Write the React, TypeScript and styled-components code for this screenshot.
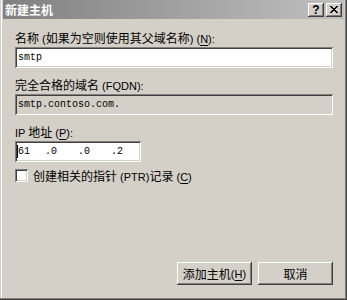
import styled, { createGlobalStyle } from 'styled-components'

const GlobalStyle = createGlobalStyle`
  html, body {
    margin: 0;
    padding: 0;
    background: #d4d0c8;
  }
  body {
    font-family: "Noto Sans CJK SC", sans-serif;
    font-size: 12px;
    color: #000;
  }
`

const raised = `
  box-shadow: inset -1px -1px #404040, inset 1px 1px #fff, inset -2px -2px #808080, inset 2px 2px #d4d0c8;
`
const sunken = `
  box-shadow: inset 1px 1px #808080, inset -1px -1px #fff, inset 2px 2px #404040, inset -2px -2px #d4d0c8;
`

export default function App() {
  return (
    <>
      <GlobalStyle />
      <Window>
        <TitleBar>
          <Title>新建主机</Title>
          <TitleButtons>
            <CaptionButton>
              <HelpMark>?</HelpMark>
            </CaptionButton>
            <CaptionButton>
              <svg width="8" height="7" viewBox="0 0 8 7" shapeRendering="crispEdges">
                <path
                  d="M0 0h2v1h-2zM6 0h2v1h-2zM1 1h2v1h-2zM5 1h2v1h-2zM2 2h4v1h-4zM3 3h2v1h-2zM2 4h4v1h-4zM1 5h2v1h-2zM5 5h2v1h-2zM0 6h2v1h-2zM6 6h2v1h-2z"
                  fill="#000"
                />
              </svg>
            </CaptionButton>
          </TitleButtons>
        </TitleBar>
        <Body>
          <Label>
            名称<Latin> (</Latin>如果为空则使用其父域名称<Latin>) (<u>N</u>):</Latin>
          </Label>
          <Field $gap={2}>
            <FieldText>smtp</FieldText>
          </Field>
          <Label $gap={10}>
            完全合格的域名<Latin> (FQDN):</Latin>
          </Label>
          <Field $gap={2} $disabled>
            <FieldText>smtp.contoso.com.</FieldText>
          </Field>
          <Label $gap={10}>
            <Latin>IP </Latin>地址<Latin> (<u>P</u>):</Latin>
          </Label>
          <IpField $gap={2}>
            <Caret />
            <Octet $width={27}>61</Octet>
            <Octet $width={33}>.0</Octet>
            <Octet $width={33}>.0</Octet>
            <Octet $width={20}>.2</Octet>
          </IpField>
          <CheckRow>
            <CheckBox />
            <span>
              创建相关的指针<Latin> (PTR)</Latin>记录<Latin> (<u>C</u>)</Latin>
            </span>
          </CheckRow>
          <Spacer />
          <ButtonRow>
            <Button>
              添加主机<Latin> (<u>H</u>)</Latin>
            </Button>
            <Button>取消</Button>
          </ButtonRow>
        </Body>
      </Window>
    </>
  )
}

const Window = styled.div`
  box-sizing: border-box;
  width: 347px;
  height: 300px;
  display: flex;
  flex-direction: column;
  padding: 0 3px 3px 3px;
  background: #d4d0c8;
  box-shadow: inset -1px -1px #404040, inset -2px -2px #808080, inset 1px 0 #d4d0c8, inset 2px 0 #fff;
`
const TitleBar = styled.div`
  height: 19px;
  display: flex;
  align-items: center;
  justify-content: space-between;
  padding: 0 2px 0 2px;
  background: linear-gradient(to right, #808080, #c0c0c0);
`
const Title = styled.span`
  color: #fff;
  font-weight: bold;
  font-size: 12px;
  line-height: 14px;
`
const TitleButtons = styled.div`
  display: flex;
  gap: 2px;
`
const CaptionButton = styled.div`
  width: 16px;
  height: 14px;
  display: flex;
  align-items: center;
  justify-content: center;
  background: #d4d0c8;
  ${raised}
`
const HelpMark = styled.span`
  font-family: "Liberation Sans", sans-serif;
  font-weight: bold;
  font-size: 12px;
  line-height: 12px;
`
const Body = styled.div`
  flex: 1;
  display: flex;
  flex-direction: column;
  padding: 12px 11px 12px 12px;
`
const Latin = styled.span`
  font-family: "Liberation Sans", sans-serif;
  font-size: 11px;
  u {
    text-underline-offset: 2px;
  }
`
const Label = styled.div<{ $gap?: number }>`
  margin-top: ${(p) => p.$gap ?? 0}px;
  height: 14px;
  line-height: 14px;
  white-space: nowrap;
`
const Field = styled.div<{ $gap?: number; $disabled?: boolean }>`
  box-sizing: border-box;
  margin-top: ${(p) => p.$gap ?? 0}px;
  height: 21px;
  display: flex;
  align-items: center;
  padding: 0 3px;
  background: ${(p) => (p.$disabled ? '#d4d0c8' : '#fff')};
  ${sunken}
`
const FieldText = styled.span`
  font-family: "Liberation Mono", monospace;
  font-size: 10px;
`
const IpField = styled(Field)`
  width: 126px;
  padding: 0 2px;
`
const Caret = styled.div`
  width: 1px;
  height: 13px;
  background: #000;
`
const Octet = styled.span<{ $width: number }>`
  width: ${(p) => p.$width}px;
  font-family: "Liberation Mono", monospace;
  font-size: 10px;
`
const CheckRow = styled.div`
  margin-top: 6px;
  display: flex;
  align-items: center;
  gap: 5px;
  height: 14px;
  white-space: nowrap;
`
const CheckBox = styled.div`
  width: 13px;
  height: 13px;
  background: #fff;
  ${sunken}
`
const Spacer = styled.div`
  flex: 1;
`
const ButtonRow = styled.div`
  display: flex;
  justify-content: flex-end;
  gap: 6px;
`
const Button = styled.div`
  width: 75px;
  height: 23px;
  display: flex;
  align-items: center;
  justify-content: center;
  background: #d4d0c8;
  white-space: nowrap;
  ${raised}
`
